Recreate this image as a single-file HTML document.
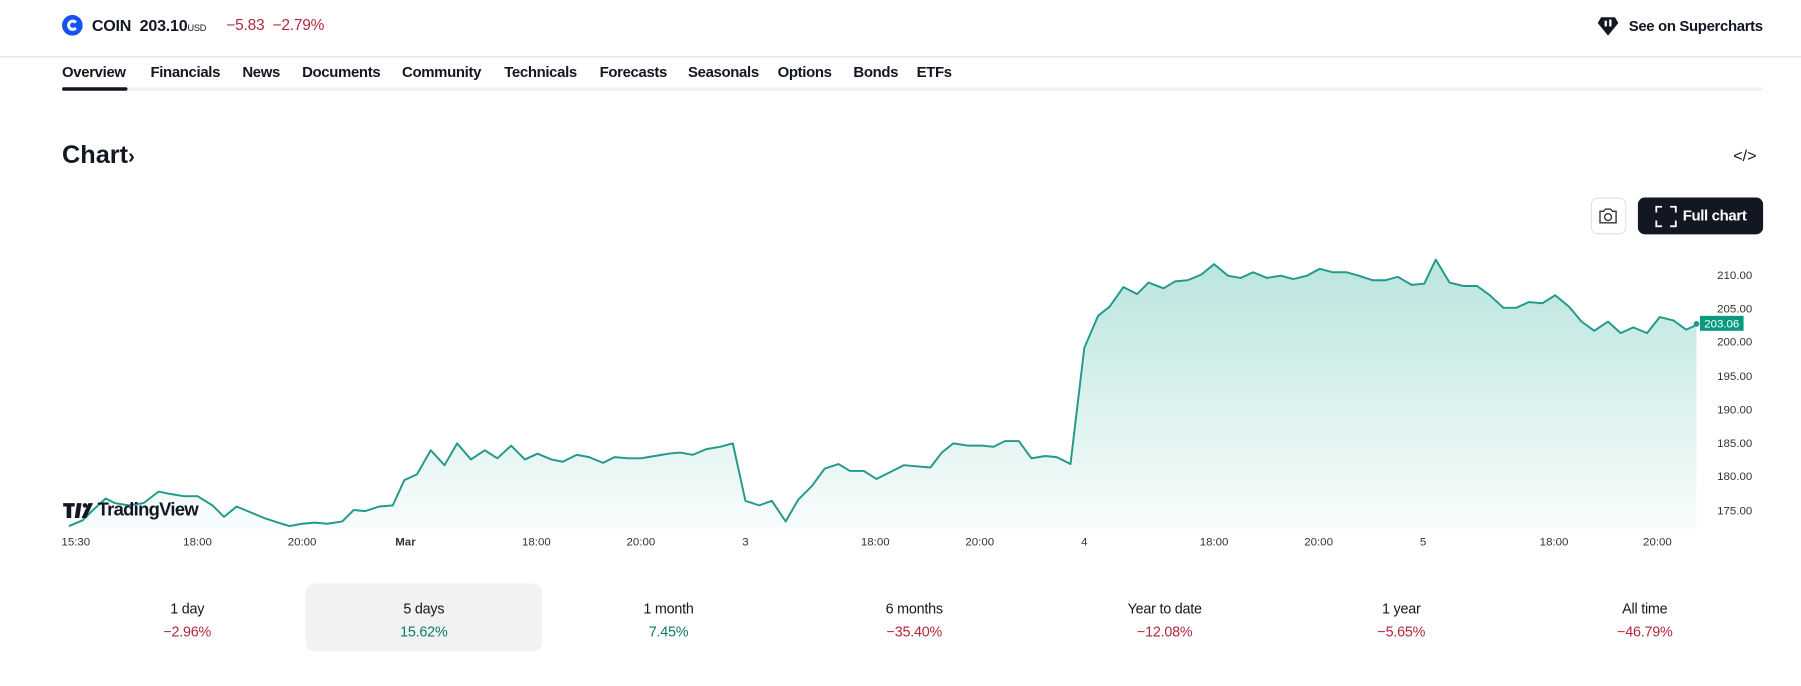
<!DOCTYPE html>
<html><head><meta charset="utf-8"><style>
*{margin:0;padding:0;box-sizing:border-box}
html,body{width:1801px;height:686px;overflow:hidden;background:#fff}
#w{position:absolute;left:0;top:0;width:1568px;height:597px;transform:scale(1.14860);transform-origin:0 0;font-family:"Liberation Sans",sans-serif;color:#131722}
.a{position:absolute;white-space:nowrap}
.tab{position:absolute;top:55px;font-size:13px;font-weight:bold;color:#131722;letter-spacing:-0.3px}
.ax{position:absolute;font-size:10px;color:#333;transform:translateX(-50%)}
.py{position:absolute;left:1495px;font-size:10px;color:#333}
.p{position:absolute;top:520px;width:206px;text-align:center;font-size:12.5px;line-height:20px;letter-spacing:-0.2px}
.red{color:#b2283b}.grn{color:#0e7a67}
</style></head><body><div id="w">
<svg class="a" style="left:54px;top:13px" width="18" height="18" viewBox="0 0 18 18"><circle cx="9" cy="9" r="9" fill="#1652f0"/><path d="M12 6.6A3.6 3.6 0 1 0 12 11.4" stroke="#fff" stroke-width="2.6" fill="none"/></svg>
<div class="a" style="left:80px;top:14px;font-size:14px;font-weight:bold;letter-spacing:-0.2px">COIN&nbsp; 203.10<span style="font-size:8px;font-weight:normal">USD</span></div>
<div class="a red" style="left:197px;top:14px;font-size:13.5px;letter-spacing:-0.2px">−5.83&nbsp; −2.79%</div>
<svg class="a" style="left:1390px;top:13px" width="20" height="20" viewBox="0 0 20 20"><path d="M4 2h12l3 5-9 11L1 7z" fill="#131722"/><rect x="7" y="5" width="2" height="5" fill="#fff"/><rect x="11" y="4" width="2" height="6" fill="#fff"/></svg>
<div class="a" style="left:1418px;top:15px;font-size:13px;font-weight:bold;letter-spacing:-0.3px">See on Supercharts</div>
<div class="a" style="left:0;top:49px;width:1568px;height:1px;background:#e0e3eb"></div>
<div class="tab" style="left:54px">Overview</div><div class="tab" style="left:131px">Financials</div><div class="tab" style="left:211px">News</div><div class="tab" style="left:263px">Documents</div><div class="tab" style="left:350px">Community</div><div class="tab" style="left:439px">Technicals</div><div class="tab" style="left:522px">Forecasts</div><div class="tab" style="left:599px">Seasonals</div><div class="tab" style="left:677px">Options</div><div class="tab" style="left:743px">Bonds</div><div class="tab" style="left:798px">ETFs</div>
<div class="a" style="left:54px;top:76px;width:1481px;height:3px;background:#f0f1f3"></div>
<div class="a" style="left:54px;top:76px;width:57px;height:3px;background:#131722;border-radius:2px"></div>
<div class="a" style="left:54px;top:122px;font-size:22px;font-weight:bold">Chart<span style="font-size:18px">›</span></div>
<div class="a" style="left:1509px;top:127px;font-size:14px">&lt;/&gt;</div>
<div class="a" style="left:1385px;top:172px;width:31px;height:32px;border:1px solid #e0e3eb;border-radius:6px"></div>
<svg class="a" style="left:1391px;top:180px" width="18" height="16" viewBox="0 0 18 16"><path d="M2 4h3l2-2h4l2 2h3v10H2z" fill="none" stroke="#333" stroke-width="1.2"/><circle cx="9" cy="9" r="3" fill="none" stroke="#333" stroke-width="1.2"/></svg>
<div class="a" style="left:1426px;top:172px;width:109px;height:32px;background:#131722;border-radius:6px"></div>
<svg class="a" style="left:1441px;top:179px" width="19" height="19" viewBox="0 0 19 19" fill="none" stroke="#fff" stroke-width="1.6"><path d="M1 6V1h5M13 1h5v5M18 13v5h-5M6 18H1v-5"/></svg>
<div class="a" style="left:1465px;top:180px;font-size:13px;font-weight:bold;color:#fff;letter-spacing:-0.3px">Full chart</div>
<svg class="a" style="left:0;top:0" width="1568" height="597" viewBox="0 0 1568 597">
<defs><linearGradient id="g" x1="0" y1="220" x2="0" y2="460" gradientUnits="userSpaceOnUse"><stop offset="0" stop-color="#22ab94" stop-opacity="0.32"/><stop offset="1" stop-color="#22ab94" stop-opacity="0.03"/></linearGradient></defs>
<path d="M60,458 L72,453 80,445 92,434 100,438 112,440 125,438 138,428 148,430 160,432 172,432 185,440 195,450 206,441 218,446 230,451 242,455 252,458 263,456 274,455 285,456 298,454 308,444 318,445 330,441 342,440 352,418 363,413 375,392 387,405 398,386 410,400 422,392 433,399 445,388 457,400 468,395 480,400 490,402 502,396 513,398 525,403 535,398 547,399 558,399 570,397 582,395 592,394 603,396 615,391 627,389 638,386 649,436 661,440 672,436 684,454 695,435 707,423 718,408 730,404 740,410 752,410 763,417 775,411 787,405 798,406 810,407 820,394 830,386 843,388 855,388 865,389 875,384 887,384 898,399 910,397 920,398 932,404 944,303 956,275 966,267 978,250 990,256 1000,246 1013,251 1023,245 1034,244 1046,239 1057,230 1069,240 1080,242 1091,237 1103,242 1115,240 1126,243 1138,240 1149,234 1160,237 1172,237 1183,240 1195,244 1206,244 1217,241 1229,248 1240,247 1250,226 1262,246 1274,249 1286,249 1297,257 1309,268 1320,268 1331,263 1343,264 1354,257 1366,267 1377,280 1388,288 1400,280 1411,290 1422,285 1434,290 1445,276 1457,279 1468,287 1477,283 L1477,460 L60,460Z" fill="url(#g)"/>
<path d="M60,458 L72,453 80,445 92,434 100,438 112,440 125,438 138,428 148,430 160,432 172,432 185,440 195,450 206,441 218,446 230,451 242,455 252,458 263,456 274,455 285,456 298,454 308,444 318,445 330,441 342,440 352,418 363,413 375,392 387,405 398,386 410,400 422,392 433,399 445,388 457,400 468,395 480,400 490,402 502,396 513,398 525,403 535,398 547,399 558,399 570,397 582,395 592,394 603,396 615,391 627,389 638,386 649,436 661,440 672,436 684,454 695,435 707,423 718,408 730,404 740,410 752,410 763,417 775,411 787,405 798,406 810,407 820,394 830,386 843,388 855,388 865,389 875,384 887,384 898,399 910,397 920,398 932,404 944,303 956,275 966,267 978,250 990,256 1000,246 1013,251 1023,245 1034,244 1046,239 1057,230 1069,240 1080,242 1091,237 1103,242 1115,240 1126,243 1138,240 1149,234 1160,237 1172,237 1183,240 1195,244 1206,244 1217,241 1229,248 1240,247 1250,226 1262,246 1274,249 1286,249 1297,257 1309,268 1320,268 1331,263 1343,264 1354,257 1366,267 1377,280 1388,288 1400,280 1411,290 1422,285 1434,290 1445,276 1457,279 1468,287 1477,283" fill="none" stroke="#22998a" stroke-width="1.7" stroke-linejoin="round"/>
<circle cx="1477" cy="282" r="2.5" fill="#22998a"/>
<rect x="1480" y="275" width="38" height="13" fill="#089981"/>
<text x="1499" y="285" font-size="10" fill="#fff" text-anchor="middle" font-family="Liberation Sans,sans-serif">203.06</text>
<path d="M55,438h10v3h-3v10h-4v-10h-3z M67,438h4l-2,13h-4z" fill="#131722"/>
<circle cx="74" cy="440" r="2" fill="#131722"/>
<path d="M77,438h4l-6,13h-4z" fill="#131722"/>
</svg>
<div class="a" style="left:85px;top:436px;font-size:16px;font-weight:bold;letter-spacing:-0.6px">TradingView</div>
<div class="py" style="top:235px">210.00</div><div class="py" style="top:264px">205.00</div><div class="py" style="top:293px">200.00</div><div class="py" style="top:323px">195.00</div><div class="py" style="top:352px">190.00</div><div class="py" style="top:381px">185.00</div><div class="py" style="top:410px">180.00</div><div class="py" style="top:440px">175.00</div>
<div class="ax" style="left:66px;top:467px">15:30</div><div class="ax" style="left:172px;top:467px">18:00</div><div class="ax" style="left:263px;top:467px">20:00</div><div class="ax" style="left:353px;top:467px;font-weight:bold">Mar</div><div class="ax" style="left:467px;top:467px">18:00</div><div class="ax" style="left:558px;top:467px">20:00</div><div class="ax" style="left:649px;top:467px">3</div><div class="ax" style="left:762px;top:467px">18:00</div><div class="ax" style="left:853px;top:467px">20:00</div><div class="ax" style="left:944px;top:467px">4</div><div class="ax" style="left:1057px;top:467px">18:00</div><div class="ax" style="left:1148px;top:467px">20:00</div><div class="ax" style="left:1239px;top:467px">5</div><div class="ax" style="left:1353px;top:467px">18:00</div><div class="ax" style="left:1443px;top:467px">20:00</div>
<div class="a" style="left:266px;top:508px;width:206px;height:59px;background:#f2f2f2;border-radius:8px"></div>
<div class="p" style="left:60px">1 day<br><span class="red">−2.96%</span></div>
<div class="p" style="left:266px">5 days<br><span class="grn">15.62%</span></div>
<div class="p" style="left:479px">1 month<br><span class="grn">7.45%</span></div>
<div class="p" style="left:693px">6 months<br><span class="red">−35.40%</span></div>
<div class="p" style="left:911px">Year to date<br><span class="red">−12.08%</span></div>
<div class="p" style="left:1117px">1 year<br><span class="red">−5.65%</span></div>
<div class="p" style="left:1329px">All time<br><span class="red">−46.79%</span></div>
</div></body></html>
